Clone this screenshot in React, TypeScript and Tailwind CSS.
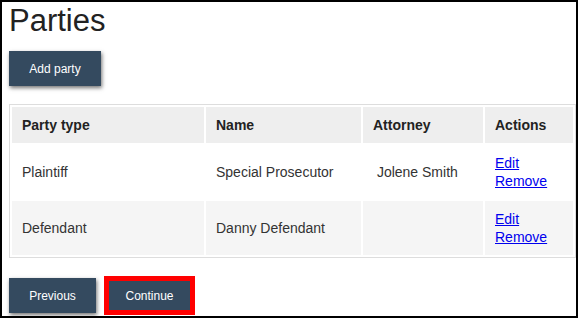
const parties = [
  { type: 'Plaintiff', name: 'Special Prosecutor', attorney: '\u00a0Jolene Smith' },
  { type: 'Defendant', name: 'Danny Defendant', attorney: '' },
]

const btn =
  'bg-[#344a5f] text-white text-[12px] leading-none flex items-center justify-center shadow-[1px_2px_4px_rgba(0,0,0,0.55)]'

export default function App() {
  return (
    <div
      className="w-[578px] h-[318px] border-2 border-black bg-white px-[7px] text-[#333]"
      style={{ fontFamily: '"Liberation Sans", Arial, sans-serif' }}
    >
      <h1 className="mt-px text-[31px] leading-[36px] text-[#222]">Parties</h1>

      <button className={`${btn} mt-[12px] w-[92px] h-[35px]`}>Add party</button>

      {/* Parties table */}
      <div className="mt-[18px] w-[567px] border border-[#dddddd] p-[2px] grid grid-cols-[192px_155px_120px_88px] grid-rows-[36px_54px_54px] gap-[2px] text-[14px]">
        {['Party type', 'Name', 'Attorney', 'Actions'].map((h) => (
          <div key={h} className="bg-[#eeeeee] pl-[10px] flex items-center font-bold text-[#222]">
            {h}
          </div>
        ))}
        {parties.map((p, i) => {
          const bg = i % 2 === 1 ? 'bg-[#f5f5f5]' : 'bg-white'
          return [
            <div key={`t${i}`} className={`${bg} pl-[10px] flex items-center`}>{p.type}</div>,
            <div key={`n${i}`} className={`${bg} pl-[10px] flex items-center`}>{p.name}</div>,
            <div key={`a${i}`} className={`${bg} pl-[10px] flex items-center`}>{p.attorney}</div>,
            <div key={`x${i}`} className={`${bg} pl-[10px] flex flex-col justify-center leading-[18px]`}>
              <a href="#" className="text-[#0000ee] underline w-fit">Edit</a>
              <a href="#" className="text-[#0000ee] underline w-fit">Remove</a>
            </div>,
          ]
        })}
      </div>

      {/* Navigation */}
      <div className="mt-[18px] flex items-center gap-[8px]">
        <button className={`${btn} w-[87px] h-[35px]`}>Previous</button>
        <div className="border-[5px] border-[#ff0000]">
          <button className={`${btn} w-[81px] h-[29px] shadow-none`}>Continue</button>
        </div>
      </div>
    </div>
  )
}
